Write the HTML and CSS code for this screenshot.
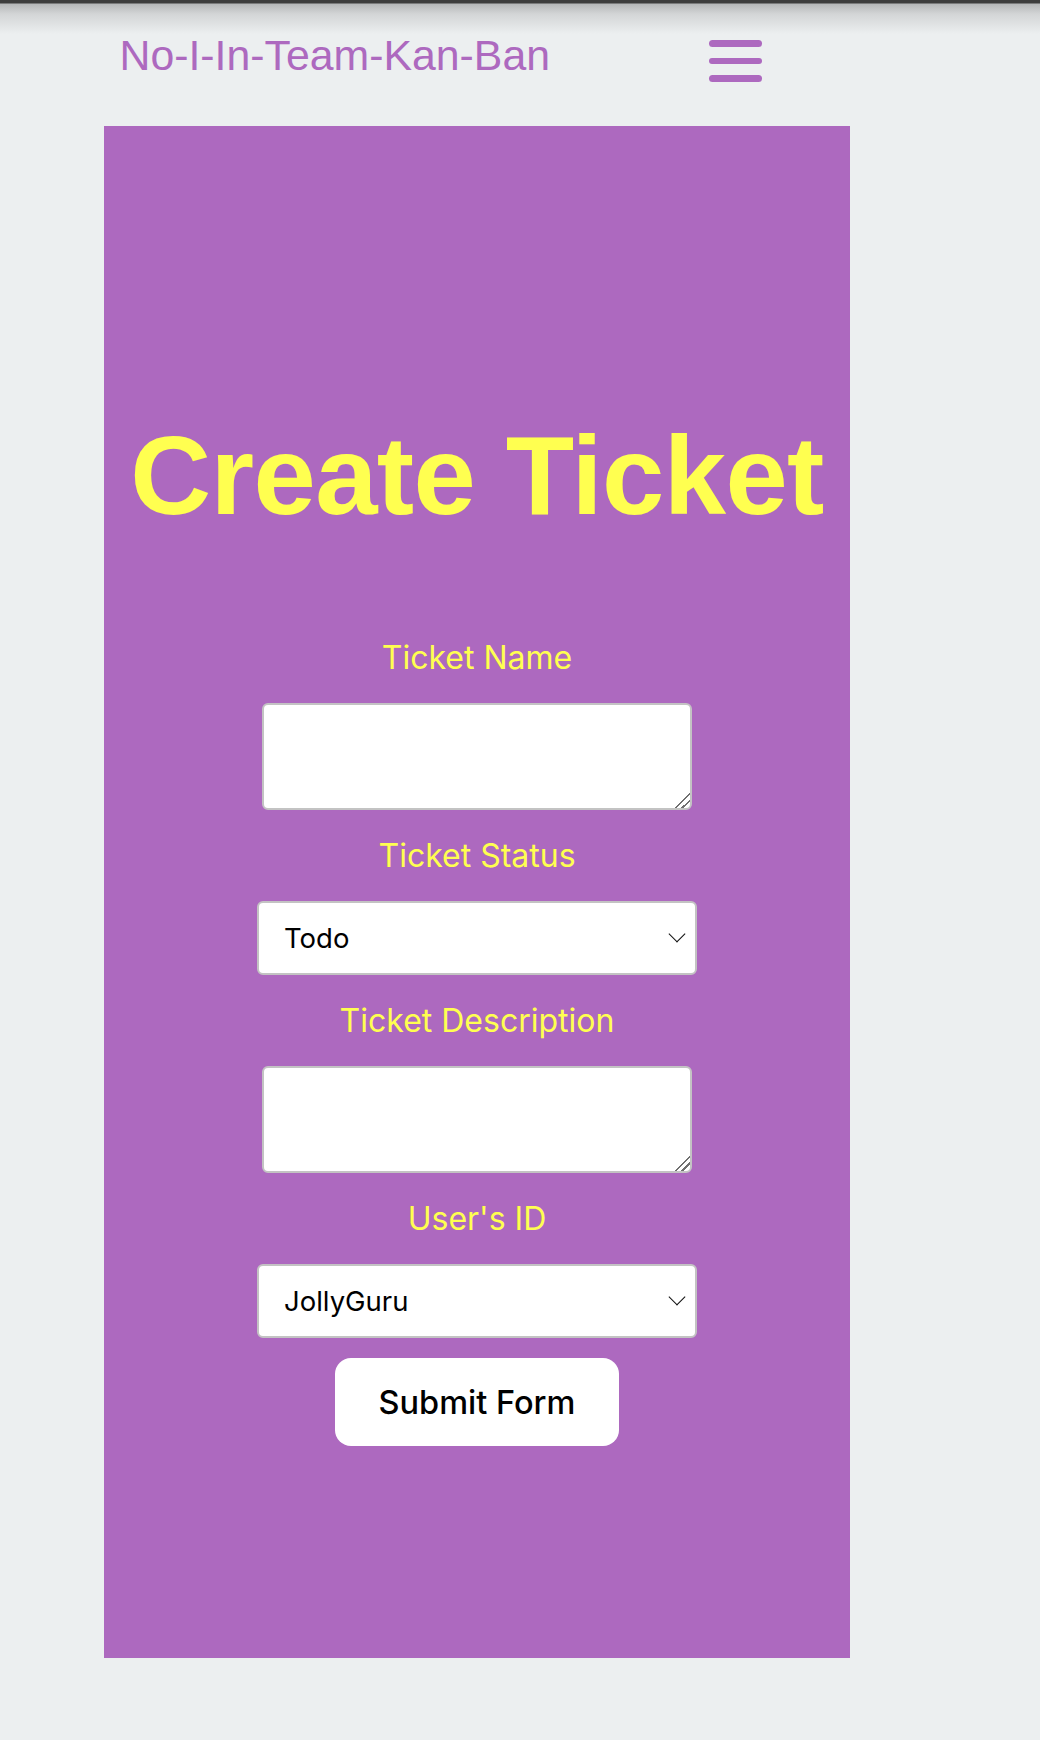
FILE: index.html
```html
<!DOCTYPE html>
<html lang="en">
<head>
<meta charset="utf-8">
<title>Create Ticket</title>
<link rel="stylesheet" href="styles.css">
</head>
<body>
<div class="page">
  <header class="header">
    <span class="brand">No-I-In-Team-Kan-Ban</span>
    <button class="menu" type="button" aria-label="Menu"><span></span><span></span><span></span></button>
  </header>
  <main class="panel">
    <h1 class="title">Create Ticket</h1>
    <form class="form">
      <label class="label" for="name">Ticket Name</label>
      <textarea id="name" class="area"></textarea>
      <label class="label" for="status">Ticket Status</label>
      <div class="select-wrap">
        <select id="status" class="select">
          <option>Todo</option>
          <option>In Progress</option>
          <option>Done</option>
        </select>
      </div>
      <label class="label" for="desc">Ticket Description</label>
      <textarea id="desc" class="area"></textarea>
      <label class="label" for="user">User's ID</label>
      <div class="select-wrap">
        <select id="user" class="select">
          <option>JollyGuru</option>
        </select>
      </div>
      <button class="submit" type="submit">Submit Form</button>
    </form>
  </main>
</div>
</body>
</html>
```
FILE: styles.css
```css
html, body {
  margin: 0;
  padding: 0;
}

body {
  min-height: 1740px;
  background-color: #eceff0;
  background-image: linear-gradient(to bottom, #3d3d3d 0, #3d3d3d 3px, #b5b7b8 4px, #d3d5d6 14px, #eceff0 34px);
  background-repeat: no-repeat;
  background-size: 100% 34px;
  font-family: Inter, "Liberation Sans", sans-serif;
}

.page {
  width: 746px;
  margin-left: 104px;
}

.header {
  height: 126px;
  box-sizing: border-box;
  padding: 34px 88px 0 15.5px;
  display: flex;
  justify-content: space-between;
  align-items: flex-start;
}

.brand {
  font-family: "Liberation Sans", Arial, sans-serif;
  font-size: 42.8px;
  line-height: 42px;
  color: #ad69bf;
}

.menu {
  margin-top: 6px;
  width: 53px;
  padding: 0;
  border: 0;
  background: none;
  display: flex;
  flex-direction: column;
  gap: 11px;
}

.menu span {
  display: block;
  height: 6.5px;
  border-radius: 4px;
  background: #ad69bf;
}

.panel {
  height: 1532px;
  background: #ad69bf;
  display: flex;
  flex-direction: column;
  align-items: center;
}

.title {
  margin: 294px 0 0;
  font-family: "Liberation Sans", Arial, sans-serif;
  font-weight: 700;
  font-size: 112px;
  line-height: 112px;
  letter-spacing: -0.6px;
  color: #ffff50;
  white-space: nowrap;
}

.form {
  margin-top: 80px;
  display: flex;
  flex-direction: column;
  align-items: center;
}

.label {
  margin: 25px 0;
  font-family: Inter, sans-serif;
  font-size: 32px;
  line-height: 41px;
  color: #ffff50;
}

.area {
  display: block;
  margin: 0;
  width: 430px;
  height: 107px;
  box-sizing: border-box;
  border: 2px solid #c3c3c3;
  border-radius: 6px;
  background: #fff;
}

.area::-webkit-resizer {
  background: linear-gradient(135deg, transparent 0 47%, #6f6f6f 47% 55%, transparent 55% 70%, #6f6f6f 70% 78%, transparent 78%);
}

.select-wrap {
  position: relative;
  width: 440px;
}

.select-wrap::after {
  content: "";
  position: absolute;
  left: 414px;
  top: 27px;
  width: 12px;
  height: 12px;
  box-sizing: border-box;
  border-right: 1.8px solid #111;
  border-bottom: 1.8px solid #111;
  transform: rotate(45deg);
  pointer-events: none;
}

.select {
  display: block;
  width: 100%;
  height: 74px;
  margin: 0;
  box-sizing: border-box;
  appearance: none;
  -webkit-appearance: none;
  border: 2px solid #c3c3c3;
  border-radius: 6px;
  background: #fff;
  padding: 0 0 0 25px;
  font-family: Inter, sans-serif;
  font-size: 27.5px;
  color: #000;
}

.submit {
  margin-top: 20px;
  width: 284px;
  height: 88px;
  border: 0;
  border-radius: 16px;
  background: #fff;
  font-family: Inter, sans-serif;
  font-weight: 500;
  font-size: 32.5px;
  color: #000;
  padding: 0;
}
```
